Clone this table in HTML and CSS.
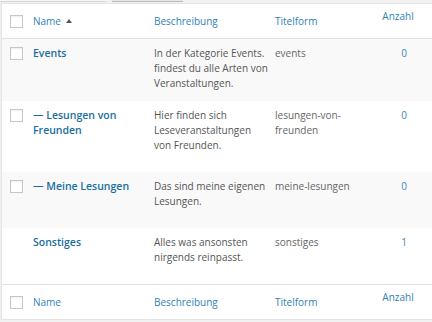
FILE: index.html
```html
<!DOCTYPE html>
<html lang="de">
<head>
<meta charset="utf-8">
<title>Kategorien</title>
<link rel="stylesheet" href="styles.css">
</head>
<body>
<div class="tablenav">
  <span class="btn btn-light"></span>
  <span class="btn btn-dark"></span>
</div>
<table class="widefat">
  <colgroup>
    <col class="c-cb"><col class="c-name"><col class="c-desc"><col class="c-slug"><col class="c-num">
  </colgroup>
  <thead>
    <tr>
      <th class="cb"><span class="checkbox"></span></th>
      <th><a class="sort">Name</a><span class="arrow"></span></th>
      <th><a>Beschreibung</a></th>
      <th><a>Titelform</a></th>
      <th class="num-h"><a>Anzahl</a></th>
    </tr>
  </thead>
  <tbody>
    <tr class="alt">
      <td class="cb"><span class="checkbox"></span></td>
      <td class="name"><a>Events</a><div class="row-actions">Bearbeiten</div></td>
      <td class="desc">In der Kategorie Events. findest du alle Arten von Veranstaltungen.</td>
      <td class="slug">events</td>
      <td class="num"><a>0</a></td>
    </tr>
    <tr>
      <td class="cb"><span class="checkbox"></span></td>
      <td class="name"><a>— Lesungen von Freunden</a><div class="row-actions">Bearbeiten</div></td>
      <td class="desc">Hier finden sich Leseveranstaltungen von Freunden.</td>
      <td class="slug">lesungen-von-freunden</td>
      <td class="num"><a>0</a></td>
    </tr>
    <tr class="alt">
      <td class="cb"><span class="checkbox"></span></td>
      <td class="name"><a>— Meine Lesungen</a><div class="row-actions">Bearbeiten</div></td>
      <td class="desc">Das sind meine eigenen Lesungen.</td>
      <td class="slug">meine-lesungen</td>
      <td class="num"><a>0</a></td>
    </tr>
    <tr>
      <td class="cb"></td>
      <td class="name"><a>Sonstiges</a><div class="row-actions">Bearbeiten</div></td>
      <td class="desc">Alles was ansonsten nirgends reinpasst.</td>
      <td class="slug">sonstiges</td>
      <td class="num"><a>1</a></td>
    </tr>
  </tbody>
  <tfoot>
    <tr>
      <th class="cb"><span class="checkbox"></span></th>
      <th><a>Name</a></th>
      <th><a>Beschreibung</a></th>
      <th><a>Titelform</a></th>
      <th class="num-h"><a>Anzahl</a></th>
    </tr>
  </tfoot>
</table>
</body>
</html>
```
FILE: styles.css
```css
html, body {
  margin: 0;
  padding: 0;
  overflow: hidden;
  background: #f1f1f1;
  font-family: "Open Sans", "Noto Sans", sans-serif;
  font-size: 10px;
  color: #555;
}

.tablenav {
  display: flex;
  gap: 6px;
  height: 3px;
  align-items: flex-start;
}

.btn {
  display: block;
  height: 1px;
  border-bottom: 1px solid #d6d6d6;
}

.btn-light {
  width: 106px;
  background: #f7f7f7;
}

.btn-dark {
  width: 71px;
  background: #e6e6e6;
  border-bottom-color: #bdbdbd;
}

.widefat {
  margin-left: 1px;
  border: 1px solid #e5e5e5;
  border-spacing: 0;
  table-layout: fixed;
  width: 438px;
  background: #fff;
  box-shadow: 0 1px 1px rgba(0, 0, 0, 0.04);
}

.c-cb { width: 27px; }
.c-name { width: 121px; }
.c-desc { width: 121px; }
.c-slug { width: 99px; }
.c-num { width: 68px; }

th, td {
  text-align: left;
  vertical-align: top;
  line-height: 15px;
  padding: 7px 4px 10px 4px;
  font-weight: normal;
}

thead th {
  padding: 10px 4px 9px 4px;
  border-bottom: 1px solid #e1e1e1;
}

tfoot th {
  padding: 10px 4px 9px 4px;
  border-top: 1px solid #e1e1e1;
}

th a {
  color: #2f82b4;
  text-decoration: none;
}

.num-h {
  text-align: center;
  padding-right: 16px;
}

.num-h a {
  position: relative;
  top: -5px;
}

.cb {
  padding-left: 8px;
  padding-right: 0;
}

thead .cb, tfoot .cb {
  padding-top: 11px;
}

td.cb {
  padding-top: 8px;
}

.checkbox {
  display: block;
  width: 11px;
  height: 11px;
  border: 1px solid #c4c8cb;
  background: #fff;
  box-shadow: inset 0 1px 2px rgba(0, 0, 0, 0.07);
}

.arrow {
  display: inline-block;
  margin-left: 5px;
  width: 0;
  height: 0;
  border-left: 3px solid transparent;
  border-right: 3px solid transparent;
  border-bottom: 4px solid #555;
  vertical-align: 2px;
}

tr.alt td {
  background: #f9f9f9;
}

.name a {
  color: #1a6e9e;
  font-weight: 600;
  font-size: 10.5px;
}

.row-actions {
  visibility: hidden;
  height: 24px;
}

.desc {
  color: #555;
  padding-right: 2px;
}

.slug {
  color: #666;
}

.num {
  text-align: center;
}

.num a {
  color: #3a88b8;
}
```
